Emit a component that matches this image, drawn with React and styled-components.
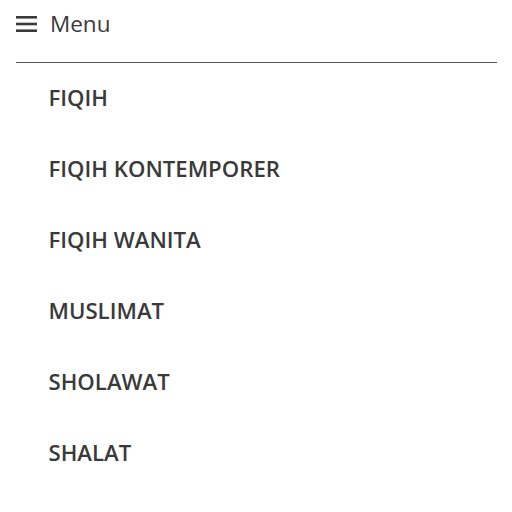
import React from "react";
import styled, { createGlobalStyle } from "styled-components";

const Global = createGlobalStyle`
  html, body { margin: 0; padding: 0; background: #fff; }
  body { font-family: "Open Sans", sans-serif; color: #3a3a3a; }
`;

const Wrap = styled.div`
  padding: 0 15px 0 16px;
`;

const Header = styled.div`
  display: flex;
  align-items: center;
  gap: 13px;
  height: 48px;
  border-bottom: 1px solid #555;
  padding-bottom: 14px;
`;

const Title = styled.span`
  font-size: 22.5px;
  font-weight: 400;
  color: #3a3a3a;
  line-height: 1;
`;

const List = styled.ul`
  list-style: none;
  margin: -1px 0 0 0;
  padding: 0 0 0 32.5px;
`;

const Item = styled.li`
  font-size: 22.2px;
  font-weight: 600;
  color: #3a3a3a;
  height: 71px;
  line-height: 71px;
`;

const items = ["FIQIH", "FIQIH KONTEMPORER", "FIQIH WANITA", "MUSLIMAT", "SHOLAWAT", "SHALAT"];

export default function App() {
  return (
    <>
      <Global />
      <Wrap>
        <Header>
          <svg width="21" height="16" viewBox="0 0 21 16">
            <rect x="0" y="0" width="21" height="2.6" fill="#3a3a3a" />
            <rect x="0" y="6.7" width="21" height="2.6" fill="#3a3a3a" />
            <rect x="0" y="13.4" width="21" height="2.6" fill="#3a3a3a" />
          </svg>
          <Title>Menu</Title>
        </Header>
        <List>
          {items.map((t) => (
            <Item key={t}>{t}</Item>
          ))}
        </List>
      </Wrap>
    </>
  );
}
